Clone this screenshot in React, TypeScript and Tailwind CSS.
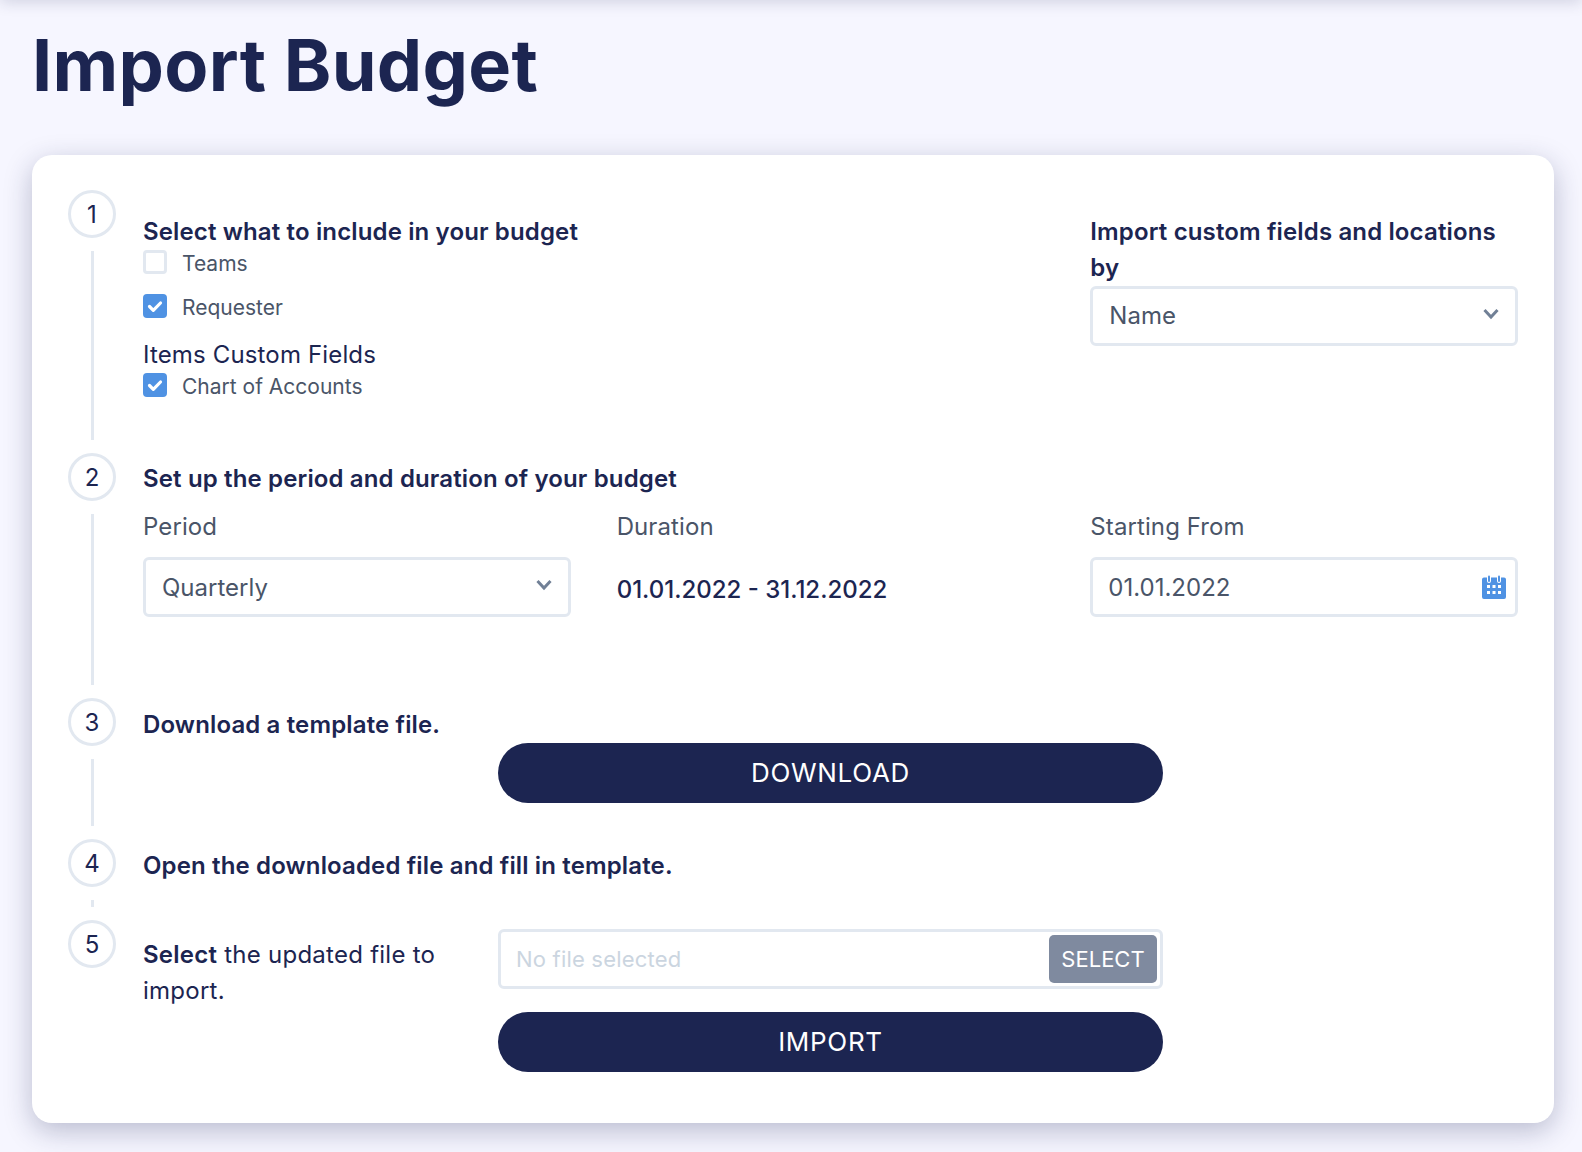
import React from 'react';

const Check = ({ checked, label }: { checked?: boolean; label: string }) => (
  <div className="flex items-center gap-[15px] h-6">
    {checked ? (
      <span className="w-6 h-6 rounded-[4px] bg-[#4f92e3] flex items-center justify-center">
        <svg viewBox="0 0 24 24" className="w-6 h-6" fill="none" stroke="#ffffff" strokeWidth="3.2" strokeLinecap="round" strokeLinejoin="round">
          <path d="M6.500 12.500l3.800 3.800L17.500 9" />
        </svg>
      </span>
    ) : (
      <span className="w-6 h-6 rounded-[4px] border-[3px] border-[#e2e8f0] bg-white" />
    )}
    <span className="pt-[3px] text-[21px] leading-6 text-[#4a5568]">{label}</span>
  </div>
);

const Chevron = () => (
  <svg viewBox="0 0 16 12" className="w-4 h-3" fill="none" stroke="#718096" strokeWidth="3">
    <path d="M1.500 2l6.500 7 6.500-7" />
  </svg>
);

const SelectBox = ({ value, textClass }: { value: string; textClass: string }) => (
  <div className="h-[60px] rounded-[6px] border-[3px] border-[#e2e8f0] bg-white flex items-center justify-between pr-[16px]">
    <span className={`text-[24px] text-[#4a5568] ${textClass}`}>{value}</span>
    <span className="mb-1"><Chevron /></span>
  </div>
);

const Calendar = () => (
  <svg viewBox="0 0 24 24" className="w-6 h-6">
    <path d="M2 2.500h20a2 2 0 0 1 2 2V22a2 2 0 0 1-2 2H2a2 2 0 0 1-2-2V4.500a2 2 0 0 1 2-2z" fill="#4f92e3" />
    <rect x="5" y="0" width="4" height="8" rx="2" fill="#ffffff" />
    <rect x="15" y="0" width="4" height="8" rx="2" fill="#ffffff" />
    <rect x="6" y="0.500" width="2" height="6.500" rx="1" fill="#4f92e3" />
    <rect x="16" y="0.500" width="2" height="6.500" rx="1" fill="#4f92e3" />
    <g fill="#ffffff">
      <rect x="5" y="10" width="3" height="3" />
      <rect x="10.500" y="10" width="3" height="3" />
      <rect x="16" y="10" width="3" height="3" />
      <rect x="5" y="16" width="3" height="3" />
      <rect x="10.500" y="16" width="3" height="3" />
      <rect x="16" y="16" width="3" height="3" />
    </g>
  </svg>
);

const Step = ({ n, last, className, children }: { n: number; last?: boolean; className: string; children: React.ReactNode }) => (
  <div className={`flex gap-[27px] ${className}`}>
    <div className="w-12 shrink-0 flex flex-col items-center">
      <div className="w-12 h-12 shrink-0 rounded-full border-[3px] border-[#e2e8f0] flex items-center justify-center pt-px text-[24px] text-[#1c2551]">
        {n}
      </div>
      {!last && <div className="w-[3px] flex-1 my-[13px] bg-[#e2e8f0]" />}
    </div>
    <div className="flex-1 min-w-0">{children}</div>
  </div>
);

const PillButton = ({ label }: { label: string }) => (
  <button className="w-full h-[60px] rounded-full bg-[#1c2551] pb-px text-white text-[26px] tracking-[0.7px]">{label}</button>
);

const heading = 'text-[24px] leading-9 font-semibold tracking-[0.14px] text-[#1c2551]';
const label = 'text-[24px] leading-9 tracking-[0.1px] text-[#4a5568]';

export default function App() {
  return (
    <div className="relative min-h-[1152px] bg-[#f6f6ff] pl-8 pr-7 overflow-hidden font-['Inter',sans-serif]">
      {/* shadow of the top bar that is cut off above */}
      <div className="absolute left-0 right-0 -top-[10px] h-[10px] shadow-[0_0_16px_rgba(28,37,81,0.25)]" />
      <h1 className="pt-[21px] h-[155px] text-[72px] leading-[88px] font-bold tracking-[0.3px] text-[#1c2551]">Import Budget</h1>
      <div className="h-[968px] bg-white rounded-[20px] shadow-[0_8px_28px_rgba(28,37,81,0.28)] pl-9 pr-9 pt-[35px]">
        <Step n={1} className="h-[263px]">
          <div className="grid grid-cols-3 gap-x-[46px] pt-[24px]">
            <div className="col-span-2">
              <div className={heading}>Select what to include in your budget</div>
              <div className="flex flex-col gap-5">
                <Check label="Teams" />
                <Check checked label="Requester" />
              </div>
              <div className="mt-[19px] text-[24px] leading-9 tracking-[0.15px] text-[#1c2551]">Items Custom Fields</div>
              <Check checked label="Chart of Accounts" />
            </div>
            <div>
              <div className={heading}>Import custom fields and locations by</div>
              <SelectBox value="Name" textClass="pl-[16px]" />
            </div>
          </div>
        </Step>
        <Step n={2} className="h-[245px]">
          <div className="pt-2">
            <div className={heading}>Set up the period and duration of your budget</div>
            <div className="grid grid-cols-3 gap-x-[46px] mt-3">
              <div>
                <div className={label}>Period</div>
                <div className="mt-[12px]"><SelectBox value="Quarterly" textClass="pl-4 pt-0.5" /></div>
              </div>
              <div>
                <div className={label}>Duration</div>
                <div className="mt-[12px] h-[60px] flex items-center pt-[6px] text-[24px] font-medium text-[#1c2551]">01.01.2022 - 31.12.2022</div>
              </div>
              <div>
                <div className={label}>Starting From</div>
                <div className="mt-[12px] h-[60px] rounded-[6px] border-[3px] border-[#e2e8f0] bg-white flex items-center justify-between pl-[15px] pr-[9px]">
                  <span className="pt-0.5 text-[24px] text-[#4a5568]">01.01.2022</span>
                  <Calendar />
                </div>
              </div>
            </div>
          </div>
        </Step>
        <Step n={3} className="h-[141px]">
          <div className="pt-[9px]">
            <div className={heading}>Download a template file.</div>
            <div className="ml-[355px] w-[665px]"><PillButton label="DOWNLOAD" /></div>
          </div>
        </Step>
        <Step n={4} className="h-[81px]">
          <div className={`pt-[9px] ${heading}`}>Open the downloaded file and fill in template.</div>
        </Step>
        <Step n={5} last className="h-[152px]">
          <div className="flex pt-[9px]">
            <div className="w-[355px] shrink-0 pt-2 pr-8 text-[24px] leading-9 tracking-[0.25px] text-[#1c2551]">
              <span className="font-semibold">Select</span> the updated file to import.
            </div>
            <div className="w-[665px]">
              <div className="h-[60px] rounded-[6px] border-[3px] border-[#e2e8f0] bg-white flex items-center justify-between pl-[15px] pr-[3px]">
                <span className="text-[22px] text-[#cbd5e0] tracking-[0.2px]">No file selected</span>
                <span className="w-[108px] h-12 rounded-[5px] bg-[#7f8a9f] text-white text-[22px] flex items-center justify-center">SELECT</span>
              </div>
              <div className="mt-[23px]"><PillButton label="IMPORT" /></div>
            </div>
          </div>
        </Step>
      </div>
    </div>
  );
}
